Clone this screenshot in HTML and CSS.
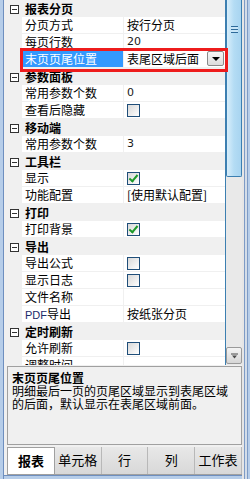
FILE: index.html
```html
<!DOCTYPE html>
<html lang="zh-CN">
<head>
    <meta charset="UTF-8">
    <meta name="viewport" content="width=device-width, initial-scale=1.0">
    <title>报表属性</title>
    <link rel="stylesheet" href="styles.css">
</head>
<body>
    <div class="frame">
        <div class="main">
            <div class="grid">
                <div class="row group"><span class="gut"><i class="minus"></i></span><span class="name">报表分页</span></div>
                <div class="row"><span class="gut"></span><span class="key">分页方式</span><span class="val">按行分页</span></div>
                <div class="row"><span class="gut"></span><span class="key">每页行数</span><span class="val num">20</span></div>
                <div class="row sel"><span class="gut"></span><span class="key">末页页尾位置</span><span class="val"><span class="combo">表尾区域后面<b class="drop"></b></span></span></div>
                <div class="row group"><span class="gut"><i class="minus"></i></span><span class="name">参数面板</span></div>
                <div class="row"><span class="gut"></span><span class="key">常用参数个数</span><span class="val num">0</span></div>
                <div class="row"><span class="gut"></span><span class="key">查看后隐藏</span><span class="val"><i class="check"></i></span></div>
                <div class="row group"><span class="gut"><i class="minus"></i></span><span class="name">移动端</span></div>
                <div class="row"><span class="gut"></span><span class="key">常用参数个数</span><span class="val num">3</span></div>
                <div class="row group"><span class="gut"><i class="minus"></i></span><span class="name">工具栏</span></div>
                <div class="row"><span class="gut"></span><span class="key">显示</span><span class="val"><i class="check on"></i></span></div>
                <div class="row"><span class="gut"></span><span class="key">功能配置</span><span class="val">[使用默认配置]</span></div>
                <div class="row group"><span class="gut"><i class="minus"></i></span><span class="name">打印</span></div>
                <div class="row"><span class="gut"></span><span class="key">打印背景</span><span class="val"><i class="check on"></i></span></div>
                <div class="row group"><span class="gut"><i class="minus"></i></span><span class="name">导出</span></div>
                <div class="row"><span class="gut"></span><span class="key">导出公式</span><span class="val"><i class="check"></i></span></div>
                <div class="row"><span class="gut"></span><span class="key">显示日志</span><span class="val"><i class="check"></i></span></div>
                <div class="row"><span class="gut"></span><span class="key">文件名称</span><span class="val"></span></div>
                <div class="row"><span class="gut"></span><span class="key"><small>PDF</small>导出</span><span class="val">按纸张分页</span></div>
                <div class="row group"><span class="gut"><i class="minus"></i></span><span class="name">定时刷新</span></div>
                <div class="row"><span class="gut"></span><span class="key">允许刷新</span><span class="val"><i class="check"></i></span></div>
                <div class="row"><span class="gut"></span><span class="key">调整时间</span><span class="val"></span></div>
            </div>
            <div class="vscroll">
                <div class="thumb"><span class="grip"></span></div>
                <div class="down"><svg width="9" height="6" viewBox="0 0 9 6"><path d="M1 1h7" stroke="#4a4a4a"/><path d="M2 2.5h5l-2.5 3z" fill="#4a4a4a"/></svg></div>
            </div>
            <div class="mark"></div>
        </div>
        <div class="desc">
            <div class="desc-title">末页页尾位置</div>
            <div class="desc-text">明细最后一页的页尾区域显示到表尾区域的后面，默认显示在表尾区域前面。</div>
        </div>
        <div class="tabs">
            <span class="tab active">报表</span>
            <span class="tab">单元格</span>
            <span class="tab">行</span>
            <span class="tab">列</span>
            <span class="tab">工作表</span>
        </div>
    </div>
</body>
</html>
```

FILE: styles.css
```css
body {
    margin: 0;
    width: 250px;
    height: 479px;
    overflow: hidden;
    font-family: "Noto Sans CJK SC", sans-serif;
    font-size: 12px;
    color: #000;
}
.frame {
    box-sizing: border-box;
    height: 479px;
    padding: 0 8px 4px 4px;
    display: flex;
    flex-direction: column;
    background:
        linear-gradient(to right, #b6cde9 0 3px, #6e8fbf 3px 4px, transparent 4px),
        linear-gradient(to left, #b6cde9 0 2px, #7d9bc6 2px 3px, #d4dde8 3px 5px, #7d9bc6 5px 6px, #e6e6e6 6px 8px, transparent 8px),
        linear-gradient(to top, #b6cde9 0 3px, #6e8fbf 3px 4px, transparent 4px),
        #f0f0f0;
}
.main {
    position: relative;
    height: 365px;
    display: flex;
    flex: none;
}
.grid {
    width: 221px;
    overflow: hidden;
}
.row {
    display: flex;
    height: 17px;
    line-height: 16px;
}
.gut {
    width: 18px;
    flex: none;
    background: #f0f0f0;
    position: relative;
}
.key {
    width: 98px;
    flex: none;
    padding-left: 3px;
    background: #fff;
    border-bottom: 1px solid #f0f0f0;
    white-space: nowrap;
    overflow: hidden;
}
.val {
    flex: 1;
    padding-left: 3px;
    background: #fff;
    border-left: 1px solid #f0f0f0;
    border-bottom: 1px solid #f0f0f0;
    white-space: nowrap;
    overflow: hidden;
    display: flex;
    align-items: center;
}
.num {
    font-family: "DejaVu Sans", sans-serif;
    font-size: 11px;
    color: #1a1a1a;
}
.key small {
    font-family: "Liberation Sans", sans-serif;
    font-size: 11px;
    color: #1a2a6a;
}
.group {
    background: #f0f0f0;
}
.group .name {
    padding-left: 3px;
    font-weight: bold;
    line-height: 18px;
}
.minus {
    position: absolute;
    left: 6px;
    top: 5px;
    width: 7px;
    height: 7px;
    border: 1px solid #333;
    background: #fff;
}
.minus::after {
    content: "";
    position: absolute;
    left: 1px;
    top: 3px;
    width: 5px;
    height: 1px;
    background: #333;
}
.sel .key {
    background: #3399ff;
    color: #fff;
}
.combo {
    position: relative;
    display: block;
    width: 100%;
    line-height: 16px;
}
.drop {
    position: absolute;
    right: 1px;
    top: 0;
    width: 15px;
    height: 13px;
    border: 1px solid #8a8a8a;
    border-radius: 2px;
    background: linear-gradient(#f6f6f6, #dcdcdc);
}
.drop::after {
    content: "";
    position: absolute;
    left: 4px;
    top: 5px;
    border-left: 4px solid transparent;
    border-right: 4px solid transparent;
    border-top: 4px solid #000;
}
.check {
    display: block;
    position: relative;
    width: 11px;
    height: 11px;
    border: 1px solid #1f4e79;
    background: linear-gradient(135deg, #d8d8d8, #ffffff);
}
.check.on::after {
    content: "";
    position: absolute;
    left: 3px;
    top: 0;
    width: 3px;
    height: 7px;
    border-right: 2px solid #1e9a2a;
    border-bottom: 2px solid #1e9a2a;
    transform: rotate(40deg);
}
.mark {
    position: absolute;
    left: 16px;
    top: 48px;
    width: 202px;
    height: 18px;
    border: 3px solid #ee1c1c;
}
.vscroll {
    position: relative;
    width: 17px;
    background: #e9e9e9;
    border-left: 1px solid #3c7fb1;
    box-sizing: border-box;
}
.thumb {
    position: absolute;
    left: 0;
    top: -2px;
    width: 14px;
    height: 178px;
    border: 1px solid #3c7fb1;
    border-top: none;
    border-radius: 0 0 2px 2px;
    background: linear-gradient(to right, #d8eefb, #b4dcf4 50%, #a8d4f0);
}
.grip {
    position: absolute;
    left: 4px;
    top: 28px;
    width: 7px;
    height: 7px;
    background: repeating-linear-gradient(#2e6a9a 0 1px, #c9e6f8 1px 3px);
}
.down {
    position: absolute;
    left: 0;
    top: 347px;
    width: 14px;
    height: 15px;
    border: 1px solid #9a9a9a;
    border-radius: 2px;
    background: linear-gradient(#f4f4f4, #d6d6d6);
    display: flex;
    align-items: center;
    justify-content: center;
}
.desc {
    margin: 1px 0 0 3px;
    height: 80px;
    box-sizing: border-box;
    border: 1px solid #a0a0a0;
    padding: 4px 4px 0 4px;
    line-height: 13px;
}
.desc-title {
    font-weight: bold;
}
.desc-text {
    width: 218px;
}
.tabs {
    margin: 2px 0 0 3px;
    height: 27px;
    display: flex;
    border-bottom: 1px solid #a0a0a0;
}
.tab {
    flex: 1;
    text-align: center;
    line-height: 25px;
    font-size: 13px;
    background: linear-gradient(#e8e8e8, #d8d8d8);
    border-right: 1px solid #b8b8b8;
}
.tab.active {
    background: #fff;
    font-weight: bold;
    border: 1px solid #a0a0a0;
    border-bottom: none;
}
```
